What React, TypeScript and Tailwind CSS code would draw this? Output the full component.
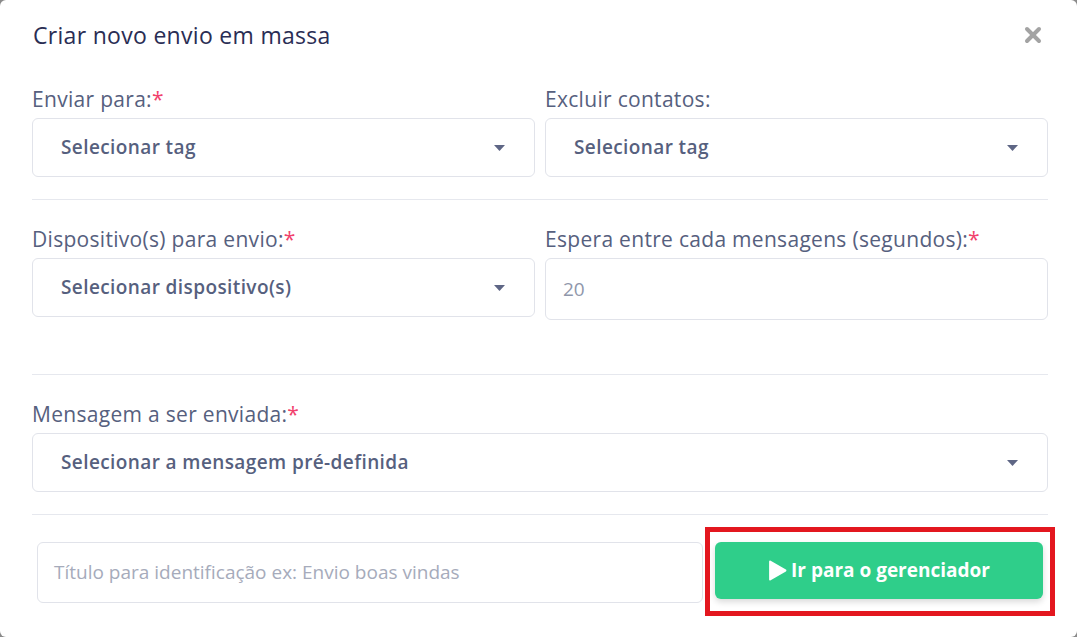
import { X } from 'lucide-react';

const font = { fontFamily: '"Open Sans", "Noto Sans", sans-serif' };

const Label = ({ text, required }: { text: string; required?: boolean }) => (
  <label className="block text-[21px] leading-[26px] tracking-[0.3px] text-[#56607e] mb-[6px]">
    {text}
    {required && <span className="text-[#f1416c]">*</span>}
  </label>
);

const Caret = () => (
  <svg width="11" height="6" viewBox="0 0 11 6" className="shrink-0">
    <path d="M0 0 L11 0 L5.5 6 Z" fill="#5e6685" />
  </svg>
);

const SelectBox = ({ text }: { text: string }) => (
  <div className="h-[59px] rounded-[6px] border border-[#e1e3ea] bg-white flex items-center justify-between pl-[28px] pr-[29px]">
    <span className="text-[19px] font-semibold tracking-[0.4px] text-[#56607e]">{text}</span>
    <Caret />
  </div>
);

export default function App() {
  return (
    <div className="w-[1077px] h-[637px] bg-[#8a8a8a] overflow-hidden" style={font}>
      <div className="w-full h-full bg-white rounded-[6px] pl-[32px] pr-[29px]">
        {/* Header */}
        <div className="h-[70px] flex items-center justify-between">
          <h2 className="text-[23px] tracking-[0.3px] text-[#2a2d54] pl-[1px]">Criar novo envio em massa</h2>
          <X className="w-[24px] h-[24px] text-[#a3a3a3] mr-[3px]" strokeWidth={4} />
        </div>

        {/* Row 1 */}
        <div className="grid grid-cols-2 gap-[10px] pt-[16px]">
          <div>
            <Label text="Enviar para:" required />
            <SelectBox text="Selecionar tag" />
          </div>
          <div>
            <Label text="Excluir contatos:" />
            <SelectBox text="Selecionar tag" />
          </div>
        </div>
        <div className="h-px bg-[#e6e8ee] mt-[22px]" />

        {/* Row 2 */}
        <div className="grid grid-cols-2 gap-[10px] pt-[26px]">
          <div>
            <Label text="Dispositivo(s) para envio:" required />
            <SelectBox text="Selecionar dispositivo(s)" />
          </div>
          <div>
            <Label text="Espera entre cada mensagens (segundos):" required />
            <div className="h-[62px] rounded-[6px] border border-[#e1e3ea] flex items-center px-[17px]">
              <span className="text-[19px] text-[#8f97ab]">20</span>
            </div>
          </div>
        </div>
        <div className="h-px bg-[#e6e8ee] mt-[54px]" />

        {/* Row 3 */}
        <div className="pt-[26px]">
          <Label text="Mensagem a ser enviada:" required />
          <SelectBox text="Selecionar a mensagem pré-definida" />
        </div>
        <div className="h-px bg-[#e6e8ee] mt-[22px]" />

        {/* Footer */}
        <div className="flex items-start pt-[27px] pl-[5px]">
          <div className="shrink-0 w-[666px] h-[61px] rounded-[6px] border border-[#e1e3ea] flex items-center px-[16px]">
            <span className="text-[19px] text-[#a6abbb]">Título para identificação ex: Envio boas vindas</span>
          </div>
          <div className="shrink-0 ml-[2px] -mt-[15px] border-[5px] border-[#e3171f] pl-[5px] pr-[7px] pt-[10px] pb-[12px]">
            <button
              type="button"
              className="w-[328px] h-[57px] rounded-[6px] bg-[#2fce8a] shadow-[0_3px_6px_rgba(0,0,0,0.15)] flex items-center justify-center gap-[4px] text-white text-[19px] font-bold"
            >
              <svg width="19" height="21" viewBox="0 0 18 20">
                <path d="M2 1.5 L16.5 10 L2 18.5 Z" fill="white" stroke="white" strokeWidth="2" strokeLinejoin="round" />
              </svg>
              Ir para o gerenciador
            </button>
          </div>
        </div>
      </div>
    </div>
  );
}
